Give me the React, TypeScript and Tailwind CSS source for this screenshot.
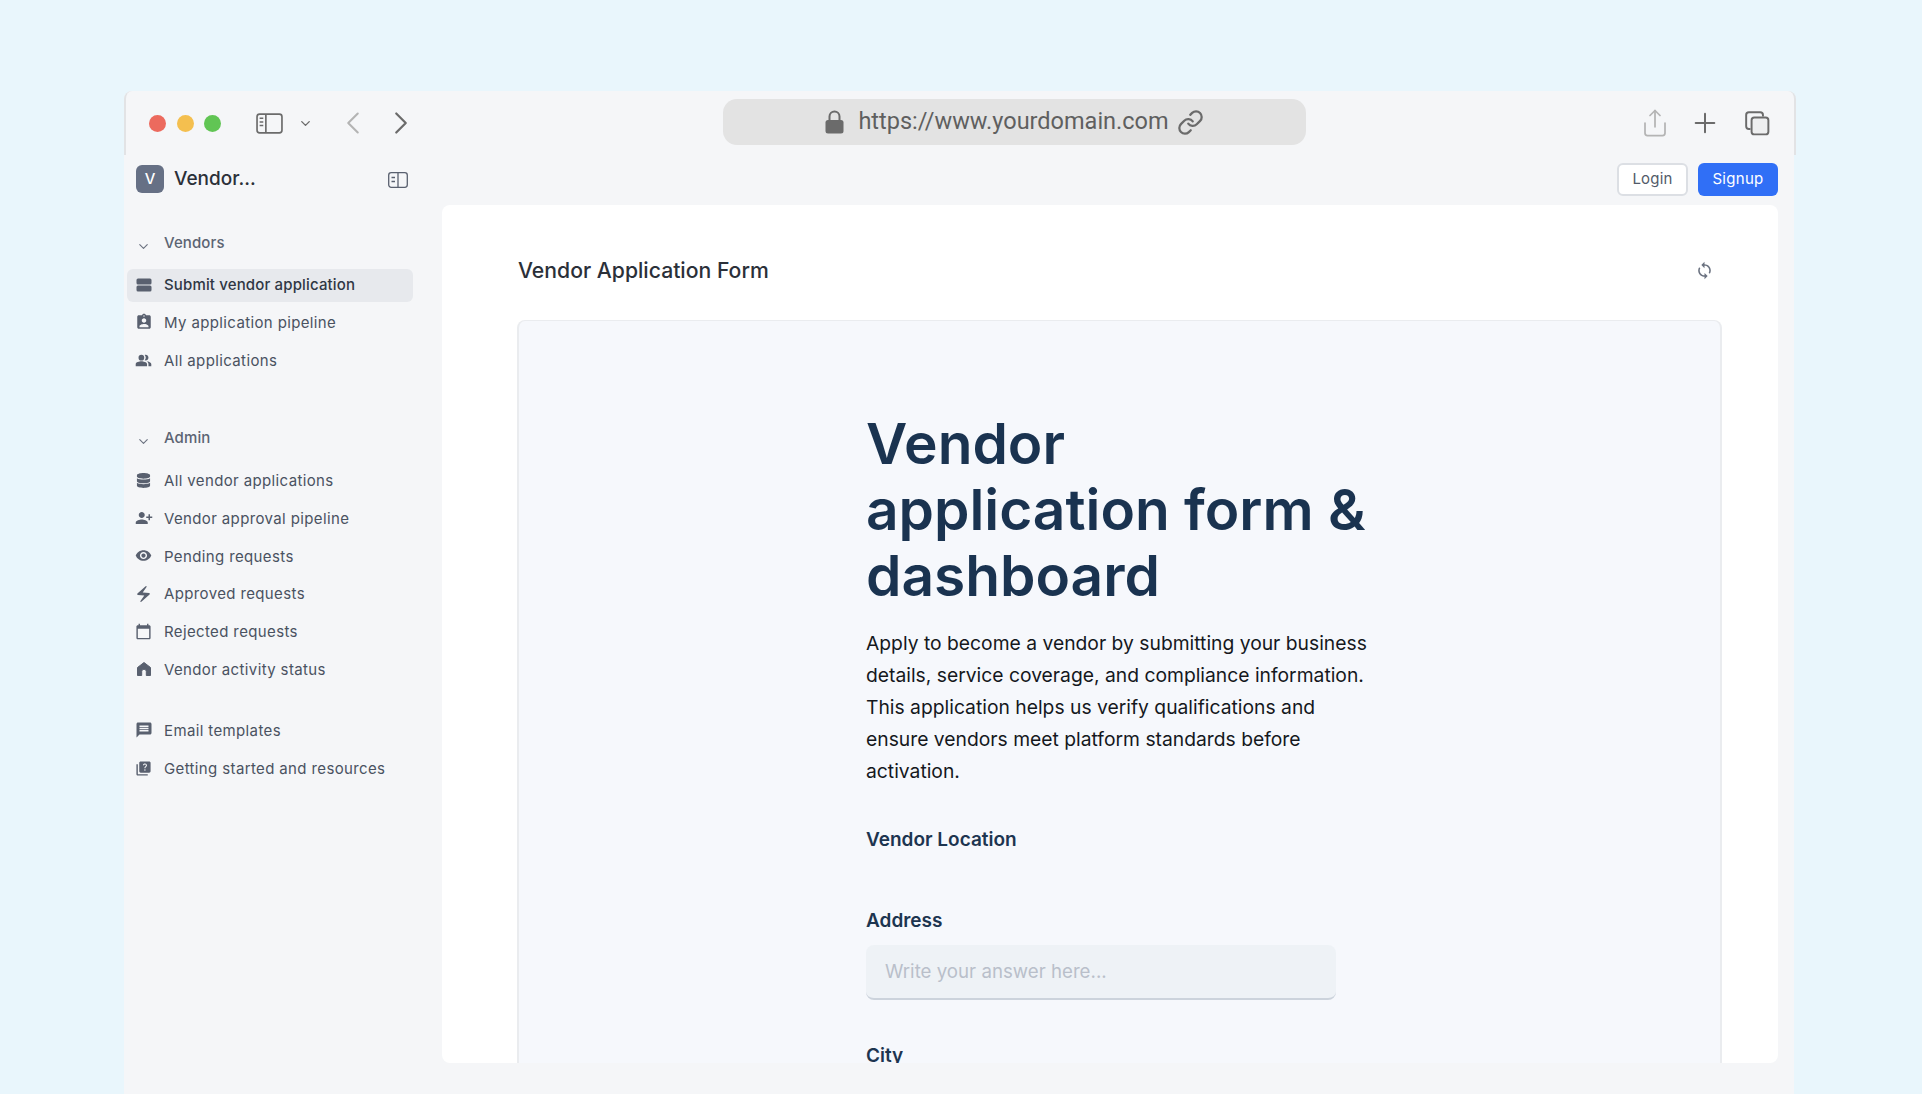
import { ChevronDown, ChevronLeft, ChevronRight, Link, Plus, Share } from 'lucide-react';
import { FaDatabase } from 'react-icons/fa';
import {
    MdAssignmentInd,
    MdCalendarToday,
    MdElectricBolt,
    MdMessage,
    MdPeopleAlt,
    MdPersonAdd,
    MdQuiz,
    MdSync,
    MdVisibility,
} from 'react-icons/md';

const StackIcon = () => (
    <svg width="16" height="14" viewBox="0 0 16 14" className="shrink-0">
        <rect x="0.5" y="0.5" width="15" height="6" rx="1.5" fill="currentColor" />
        <rect x="0.5" y="7.5" width="15" height="6" rx="1.5" fill="currentColor" />
    </svg>
);

const HomeIcon = () => (
    <svg width="16" height="16" viewBox="0 0 16 16" className="shrink-0">
        <path d="M8 1.500 14.500 6.500V14.500H10.300V10.500A2.300 2.300 0 0 0 5.700 10.500V14.500H1.500V6.500Z" fill="currentColor" stroke="currentColor" strokeWidth="1" strokeLinejoin="round" />
    </svg>
);

const LockIcon = () => (
    <svg width="19" height="24" viewBox="0 0 19 24" fill="none" className="shrink-0 text-[#6b6b6b]">
        <path d="M4.500 11V6.500a5 5 0 0 1 10 0V11" stroke="currentColor" strokeWidth="2" />
        <rect x="0.500" y="10" width="18" height="13.500" rx="2.500" fill="currentColor" />
    </svg>
);

const PanelIcon = ({ className, width, height }: { className?: string; width: number; height: number }) => (
    <svg width={width} height={height} viewBox="0 0 26 20" fill="none" className={className}>
        <rect x="1" y="1" width="24" height="18" rx="2.5" stroke="currentColor" strokeWidth="1.6" />
        <path d="M9.5 1v18" stroke="currentColor" strokeWidth="1.6" />
        <path d="M3.5 5h3.5M3.5 8.5h3.5M3.5 12h3.5" stroke="currentColor" strokeWidth="1.4" />
    </svg>
);

const SidebarToggle = () => (
    <svg width="20" height="20" viewBox="0 0 20 20" fill="none" className="text-[#59606f]">
        <rect x="0.7" y="2.7" width="18.6" height="14.6" rx="2.5" stroke="currentColor" strokeWidth="1.3" />
        <path d="M10 3v14" stroke="currentColor" strokeWidth="1.3" />
        <path d="M3.5 7.5h3.5M3.5 11.5h3.5" stroke="currentColor" strokeWidth="1.5" />
    </svg>
);

const TabsIcon = () => (
    <svg width="26" height="26" viewBox="0 0 24 24" fill="none" className="text-[#6b6b6b]">
        <path d="M6 17.5H4.5a2.5 2.5 0 0 1-2.5-2.5V4.500a2.500 2.500 0 0 1 2.500-2.500H15a2.500 2.500 0 0 1 2.500 2.500V6" stroke="currentColor" strokeWidth="1.8" />
        <rect x="7" y="7" width="15.500" height="15.500" rx="2.500" fill="#eeeff0" stroke="currentColor" strokeWidth="1.800" />
    </svg>
);

const vendorItems = [
    { label: 'Submit vendor application', icon: <StackIcon />, active: true },
    { label: 'My application pipeline', icon: <MdAssignmentInd size={18} /> },
    { label: 'All applications', icon: <MdPeopleAlt size={17} /> },
];

const adminItems = [
    { label: 'All vendor applications', icon: <FaDatabase size={15} /> },
    { label: 'Vendor approval pipeline', icon: <MdPersonAdd size={18} className="-scale-x-100" /> },
    { label: 'Pending requests', icon: <MdVisibility size={17} /> },
    { label: 'Approved requests', icon: <MdElectricBolt size={22} /> },
    { label: 'Rejected requests', icon: <MdCalendarToday size={17} /> },
    { label: 'Vendor activity status', icon: <HomeIcon /> },
];

const otherItems = [
    { label: 'Email templates', icon: <MdMessage size={18} /> },
    { label: 'Getting started and resources', icon: <MdQuiz size={17} /> },
];

const NavItem = ({ label, icon, active }: { label: string; icon: React.ReactNode; active?: boolean }) => (
    <div className={`flex h-[33px] items-center rounded-md pl-[7px] text-[15px] ${active ? 'bg-[#e7e9ed] font-medium tracking-[0.15px] text-[#2f3744]' : 'tracking-[0.37px] text-[#4a5261]'}`}>
        <span className="-mt-[2px] flex w-[30px] shrink-0 items-center justify-center pr-[11px] text-[#59606f]">{icon}</span>
        <span>{label}</span>
    </div>
);

const GroupTitle = ({ label }: { label: string }) => (
    <div className="flex h-[33px] items-center pl-[9px] text-[15px] font-medium tracking-[0.1px] text-[#5c6473]">
        <ChevronDown size={15} strokeWidth={1.8} className="mt-[6px] mr-[13px] text-[#6b7280]" />
        <span>{label}</span>
    </div>
);

export default function App() {
    return (
        <div className="h-[1094px] w-full overflow-hidden bg-[#e9f6fc] pt-[91px] pl-[124px] font-['Inter',sans-serif]">
            <div className="flex h-[1003px] w-[1670px] flex-col rounded-t-lg bg-[#f5f6f8]">
                {/* browser toolbar */}
                <div className="relative flex h-[64px] w-[1672px] shrink-0 items-center rounded-t-lg border-x-2 border-x-[#e2e3e5] bg-[#f5f6f8] pl-[23px]">
                    <div className="flex items-center gap-[10.500px]">
                        <span className="h-[17px] w-[17px] rounded-full bg-[#ec6a5e]" />
                        <span className="h-[17px] w-[17px] rounded-full bg-[#f4bf4f]" />
                        <span className="h-[17px] w-[17px] rounded-full bg-[#61c554]" />
                    </div>
                    <PanelIcon width={27} height={21} className="ml-[35px] text-[#6b6b6b]" />
                    <ChevronDown size={15} strokeWidth={2.2} className="ml-[15px] text-[#6b6b6b]" />
                    <ChevronLeft size={38} strokeWidth={1.3} className="ml-[21px] text-[#b4b4b4]" />
                    <ChevronRight size={38} strokeWidth={1.4} className="ml-[10px] text-[#6b6b6b]" />
                    <div className="mb-[2px] ml-[303px] flex h-[46px] w-[583px] items-center justify-center rounded-[14px] bg-[#e3e3e3] text-[#5f5f5f]">
                        <LockIcon />
                        <span className="ml-[14px] font-['Roboto',sans-serif] text-[23.500px]">https://www.yourdomain.com</span>
                        <Link size={27} strokeWidth={2} className="ml-[8px] text-[#6b6b6b]" />
                    </div>
                    <Share size={30} strokeWidth={1.4} className="ml-[334px] text-[#b4b4b4]" />
                    <Plus size={32} strokeWidth={1.5} className="ml-[19px] text-[#6b6b6b]" />
                    <div className="ml-[23px]">
                        <TabsIcon />
                    </div>
                </div>

                <div className="flex min-h-0 flex-1">
                    {/* sidebar */}
                    <aside className="w-[318px] shrink-0 pl-[3px]">
                        <div className="flex h-[50px] items-center pb-[2px] pl-[9px]">
                            <span className="flex h-[28px] w-[28px] items-center justify-center rounded-md bg-[#667085] text-[15px] font-medium text-white">V</span>
                            <span className="ml-[10px] text-[19px] font-medium text-[#2b3039]">Vendor...</span>
                            <span className="mt-[1px] ml-[132px]">
                                <SidebarToggle />
                            </span>
                        </div>
                        <div className="mt-[21.500px] w-[286px]">
                            <GroupTitle label="Vendors" />
                            <div className="mt-[9.700px] flex flex-col gap-[4.800px]">
                                {vendorItems.map((item) => (
                                    <NavItem key={item.label} {...item} />
                                ))}
                            </div>
                            <div className="mt-[44px]">
                                <GroupTitle label="Admin" />
                            </div>
                            <div className="mt-[10px] flex flex-col gap-[4.800px]">
                                {adminItems.map((item) => (
                                    <NavItem key={item.label} {...item} />
                                ))}
                            </div>
                            <div className="mt-[28px] flex flex-col gap-[4.800px]">
                                {otherItems.map((item) => (
                                    <NavItem key={item.label} {...item} />
                                ))}
                            </div>
                        </div>
                    </aside>

                    {/* main */}
                    <main className="flex w-[1336px] min-w-0 flex-col">
                        <div className="flex h-[50px] shrink-0 items-center justify-end gap-[10px] pb-[2px]">
                            <button className="h-[33px] w-[71px] rounded-md border-2 border-[#dcdfe4] bg-white text-[15px] tracking-[0.2px] text-[#525a69]">Login</button>
                            <button className="h-[33px] w-[80px] rounded-md bg-[#306ff6] text-[15px] tracking-[0.3px] text-white">Signup</button>
                        </div>
                        <div className="h-[858px] overflow-hidden rounded-lg bg-white pr-[56px] pl-[75px]">
                            <div className="flex h-[115px] items-center justify-between pt-[17px] pl-[1px]">
                                <h2 className="text-[21.200px] leading-none font-medium text-[#2b3039]">Vendor Application Form</h2>
                                <MdSync size={19} className="mr-[8px] -mt-[1px] text-[#6b7280]" />
                            </div>
                            <div className="h-[760px] overflow-hidden rounded-t-lg border-x-2 border-t border-[#eaecef] bg-[#f6f8fc] pt-[90px] pl-[347px]">
                                <h1 className="w-[520px] text-[56.800px] leading-[66px] font-semibold text-[#1a3350]">
                                    Vendor
                                    <br />
                                    application form &amp;
                                    <br />
                                    dashboard
                                </h1>
                                <p className="mt-[18px] w-[512px] text-[19.300px] leading-[32px] text-[#15181d]">
                                    Apply to become a vendor by submitting your business details, service coverage, and compliance information. This application helps us verify qualifications and ensure vendors meet platform standards before activation.
                                </p>
                                <div className="mt-[39px] text-[19px] font-semibold text-[#1d3550]">Vendor Location</div>
                                <div className="mt-[52px] text-[19px] font-semibold text-[#1d3550]">Address</div>
                                <div className="mt-[10px] flex h-[55px] w-[470px] items-center rounded-lg border-b-2 border-[#ccd3dc] bg-[#eef2f6] pt-[2px] pl-[19px] text-[18.700px] text-[#b9bfca]">
                                    Write your answer here...
                                </div>
                                <div className="mt-[42px] text-[19px] font-semibold text-[#1d3550]">City</div>
                            </div>
                        </div>
                    </main>
                </div>
            </div>
        </div>
    );
}
